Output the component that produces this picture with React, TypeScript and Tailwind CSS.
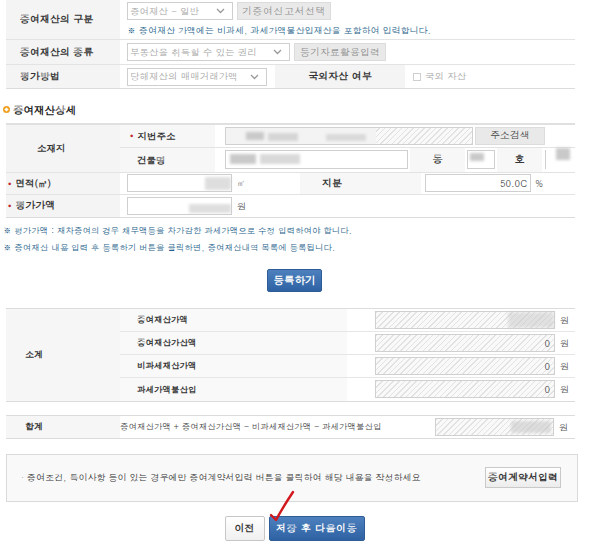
import { ReactNode } from 'react'

const font = "font-['Dotum','Noto_Sans_CJK_KR','Noto_Sans',sans-serif]"
const hatch =
  'bg-[repeating-linear-gradient(135deg,#e2e2e2_0px,#e2e2e2_1px,#f9f9f9_1px,#f9f9f9_4px)]'

function Chevron() {
  return (
    <svg width="9" height="6" viewBox="0 0 9 6" className="shrink-0">
      <path d="M1 1 L4.5 4.5 L8 1" fill="none" stroke="#9a9a9a" strokeWidth="1.3" />
    </svg>
  )
}

function FakeSelect({ label, width }: { label: string; width: string }) {
  return (
    <div
      className={`${width} h-[18px] flex items-center justify-between border border-[#cfcfcf] bg-white pl-[2px] pr-[7px] text-[9.5px] text-[#a5a5a5]`}
    >
      <span>{label}</span>
      <Chevron />
    </div>
  )
}

function GrayButton({ children, className = '' }: { children: ReactNode; className?: string }) {
  return (
    <div
      className={`h-[18px] flex items-center justify-center bg-[#e9e9e9] border border-[#dcdcdc] text-[10px] ${className}`}
    >
      {children}
    </div>
  )
}

function Blur({ className }: { className: string }) {
  return <div className={`absolute bg-[#c9c9c9] blur-[1.5px] ${className}`} />
}

function Star() {
  return <span className="text-[#c0282d] mr-[4px] text-[9px]">•</span>
}

export default function App() {
  return (
    <div className={`relative w-[589px] h-[558px] overflow-hidden bg-white ${font} text-[#333]`}>
      {/* 기본 정보 */}
      <div className="ml-[6px] w-[569px] text-[10px]">
        <div className="flex h-[40px] border-b border-[#e3e3e3]">
          <div className="w-[114px] shrink-0 bg-[#f4f4f4] flex items-center pl-[14px] font-bold">
            증여재산의 구분
          </div>
          <div className="pl-[7px] pt-[2px]">
            <div className="flex gap-[4px]">
              <FakeSelect label="증여재산 - 일반" width="w-[106px]" />
              <GrayButton className="w-[94px] text-[#8f8f8f] tracking-[0.5px]">기증여신고서선택</GrayButton>
            </div>
            <div className="mt-[4px] text-[9px] text-[#1d5f8a]">
              ※ 증여재산 가액에는 비과세, 과세가액불산입재산을 포함하여 입력합니다.
            </div>
          </div>
        </div>
        <div className="flex h-[25px] border-b border-[#e3e3e3]">
          <div className="w-[114px] shrink-0 bg-[#f4f4f4] flex items-center pl-[14px] font-bold">
            증여재산의 종류
          </div>
          <div className="pl-[7px] flex items-center gap-[4px]">
            <FakeSelect label="부동산을 취득할 수 있는 권리" width="w-[163px]" />
            <GrayButton className="w-[92px] text-[#8f8f8f]">등기자료활용입력</GrayButton>
          </div>
        </div>
        <div className="flex h-[24px] border-b border-[#dcdcdc]">
          <div className="w-[114px] shrink-0 bg-[#f4f4f4] flex items-center pl-[14px] font-bold">
            평가방법
          </div>
          <div className="pl-[7px] flex items-center w-[155px]">
            <FakeSelect label="당해재산의 매매거래가액" width="w-[140px]" />
          </div>
          <div className="w-[130px] bg-[#f4f4f4] flex items-center justify-center font-bold">국외자산 여부</div>
          <div className="flex items-center pl-[8px] gap-[4px] text-[#a5a5a5] text-[9.5px]">
            <span className="w-[8px] h-[8px] border border-[#cfcfcf] bg-white" />
            국외 자산
          </div>
        </div>
      </div>

      {/* 증여재산상세 */}
      <div className="mt-[13px] ml-[3px] flex items-center gap-[3px] text-[10.5px] font-bold text-[#222]">
        <span className="w-[7px] h-[7px] rounded-full bg-[#f0a020] flex items-center justify-center">
          <span className="w-[3px] h-[3px] bg-white rotate-45" />
        </span>
        증여재산상세
      </div>

      <div className="mt-[5px] ml-[6px] w-[569px] text-[9.5px] border-t-2 border-[#e0e0e0]">
        <div className="flex border-b border-[#e3e3e3]">
          <div className="w-[114px] shrink-0 bg-[#f4f4f4] flex items-center pl-[31px] font-bold">소재지</div>
          <div className="flex-1">
            <div className="flex h-[23px] border-b border-[#e3e3e3]">
              <div className="w-[95px] shrink-0 bg-[#f7f7f7] flex items-center pl-[10px] font-bold">
                <Star />
                지번주소
              </div>
              <div className="flex items-center pl-[10px] gap-[2px]">
                <div className={`relative w-[248px] h-[18px] border border-[#d0d0d0] ${hatch}`}>
                  <div className="absolute left-0 top-0 w-[150px] h-full bg-[#f3f3f3]" />
                  <Blur className="left-[20px] top-[4px] w-[18px] h-[8px]" />
                  <Blur className="left-[42px] top-[5px] w-[30px] h-[8px] opacity-70" />
                  <Blur className="left-[100px] top-[6px] w-[40px] h-[7px] opacity-60" />
                </div>
                <GrayButton className="w-[70px] text-[#444]">주소검색</GrayButton>
              </div>
            </div>
            <div className="flex h-[24px]">
              <div className="w-[95px] shrink-0 bg-[#f7f7f7] flex items-center pl-[17px] font-bold">건물명</div>
              <div className="flex items-center pl-[10px] w-[195px]">
                <div className="relative w-[183px] h-[19px] border border-[#cfcfcf] bg-white">
                  <Blur className="left-[4px] top-[3px] w-[26px] h-[10px]" />
                  <Blur className="left-[34px] top-[3px] w-[40px] h-[10px] opacity-70" />
                </div>
              </div>
              <div className="w-[55px] bg-[#f7f7f7] flex items-center justify-center font-bold text-[10px]">동</div>
              <div className="flex items-center pl-[2px] w-[32px]">
                <div className="relative w-[28px] h-[19px] border border-[#cfcfcf] bg-white">
                  <Blur className="left-[2px] top-[2px] w-[14px] h-[8px]" />
                </div>
              </div>
              <div className="w-[45px] bg-[#f7f7f7] flex items-center justify-center font-bold text-[10px]">호</div>
              <div className="flex items-center pl-[3px] flex-1">
                <div className="relative w-full h-[19px] border-l border-[#cfcfcf]">
                  <Blur className="left-[10px] -top-[2px] w-[14px] h-[12px]" />
                </div>
              </div>
            </div>
          </div>
        </div>
        <div className="flex h-[22px] border-b border-[#e3e3e3]">
          <div className="w-[114px] shrink-0 bg-[#f4f4f4] flex items-center pl-[2px] font-bold">
            <Star />
            면적(㎡)
          </div>
          <div className="flex items-center pl-[7px] w-[180px] gap-[5px]">
            <div className="relative w-[105px] h-[18px] border border-[#cfcfcf] bg-white">
              <Blur className="right-0 top-[2px] w-[26px] h-[13px] opacity-60" />
            </div>
            <span className="text-[8px] text-[#555]">㎡</span>
          </div>
          <div className="w-[121px] bg-[#f7f7f7] flex items-center pl-[22px] font-bold text-[10px]">지분</div>
          <div className="flex items-center pl-[4px] gap-[4px]">
            <div className="w-[106px] h-[18px] border border-[#cfcfcf] bg-white flex items-center justify-end pr-[3px] text-[9.5px]">
              50.0C
            </div>
            <span className="text-[9px] text-[#555]">%</span>
          </div>
        </div>
        <div className="flex h-[23px] border-b border-[#dcdcdc]">
          <div className="w-[114px] shrink-0 bg-[#f4f4f4] flex items-center pl-[2px] font-bold text-[10px]">
            <Star />
            평가가액
          </div>
          <div className="flex items-center pl-[7px] gap-[5px]">
            <div className="relative w-[105px] h-[18px] border border-[#cfcfcf] bg-white">
              <Blur className="right-0 bottom-[1px] w-[42px] h-[9px] opacity-60" />
            </div>
            <span className="text-[9.5px] text-[#555]">원</span>
          </div>
        </div>
      </div>

      <div className="mt-[4px] ml-[3px] text-[8.5px] text-[#1d5f8a] leading-[17px]">
        <div>※ 평가가액 : 재차증여의 경우 채무액등을 차가감한 과세가액으로 수정 입력하여야 합니다.</div>
        <div>※ 증여재산 내용 입력 후 등록하기 버튼을 클릭하면, 증여재산내역 목록에 등록됩니다.</div>
      </div>

      <div className="mt-[13px] flex justify-center">
        <div className="w-[55px] h-[23px] rounded-[2px] bg-gradient-to-b from-[#4d80bd] to-[#2f62a3] border border-[#2e5c96] text-white font-bold text-[10.5px] flex items-center justify-center">
          등록하기
        </div>
      </div>

      {/* 소계 */}
      <div className="mt-[16px] ml-[6px] w-[569px] text-[8.5px] border-t border-[#dcdcdc] border-b flex">
        <div className="w-[114px] shrink-0 bg-[#f6f6f6] flex items-center pl-[19px] font-bold text-[9px]">
          소계
        </div>
        <div className="flex-1">
          {[
            { label: '증여재산가액', value: '', blur: true },
            { label: '증여재산가산액', value: '0', blur: false },
            { label: '비과세재산가액', value: '0', blur: false },
            { label: '과세가액불산입', value: '0', blur: false },
          ].map((r, i) => (
            <div key={r.label} className={`flex h-[23px] ${i < 3 ? 'border-b border-[#e6e6e6]' : ''}`}>
              <div className="w-[227px] shrink-0 bg-[#f9f9f9] flex items-center pl-[17px] font-bold">
                {r.label}
              </div>
              <div className="flex items-center pl-[28px] gap-[5px]">
                <div
                  className={`relative w-[180px] h-[18px] border border-[#d0d0d0] ${hatch} flex items-center justify-end pr-[4px] text-[9.5px]`}
                >
                  {r.blur && <Blur className="right-0 top-0 w-[46px] h-[16px] opacity-50" />}
                  {r.value}
                </div>
                <span className="text-[9.5px] text-[#555]">원</span>
              </div>
            </div>
          ))}
        </div>
      </div>

      {/* 합계 */}
      <div className="mt-[13px] ml-[6px] w-[569px] h-[24px] text-[10px] border-t border-b border-[#dcdcdc] flex">
        <div className="w-[114px] shrink-0 bg-[#f6f6f6] flex items-center pl-[19px] font-bold text-[9px]">
          합계
        </div>
        <div className="w-[315px] flex items-center text-[8.5px] text-[#444]">
          증여재산가액 + 증여재산가산액 - 비과세재산가액 - 과세가액불산입
        </div>
        <div className="flex items-center gap-[5px]">
          <div className={`relative w-[119px] h-[18px] border border-[#d0d0d0] ${hatch}`}>
            <Blur className="right-[2px] top-[2px] w-[40px] h-[12px] opacity-60" />
          </div>
          <span className="text-[9.5px] text-[#555]">원</span>
        </div>
      </div>

      {/* 안내 */}
      <div className="mt-[15px] ml-[6px] w-[572px] h-[48px] border border-[#dadada] bg-[#f9f9f9] flex items-center justify-between pl-[14px] pr-[16px]">
        <span className="text-[9px] text-[#333]">
          <span className="text-[#999] mr-[3px]">·</span>
          증여조건, 특이사항 등이 있는 경우에만 증여계약서입력 버튼을 클릭하여 해당 내용을 작성하세요
        </span>
        <div className="w-[76px] h-[21px] border border-[#c9c9c9] bg-gradient-to-b from-white to-[#ececec] flex items-center justify-center font-bold text-[10px] text-[#333]">
          증여계약서입력
        </div>
      </div>

      <div className="mt-[14px] flex justify-center gap-[4px]">
        <div className="w-[40px] h-[25px] border border-[#c6c6c6] bg-gradient-to-b from-white to-[#f0f0f0] rounded-[2px] flex items-center justify-center font-bold text-[10px]">
          이전
        </div>
        <div className="w-[96px] h-[25px] rounded-[2px] bg-gradient-to-b from-[#4d80bd] to-[#2f62a3] border border-[#2e5c96] text-white font-bold text-[10px] flex items-center justify-center tracking-[0.5px]">
          저장 후 다음이동
        </div>
      </div>

      {/* 빨간 체크 표시 */}
      <svg className="absolute left-[268px] top-[489px]" width="30" height="34" viewBox="0 0 30 34">
        <path
          d="M3 26 L8 31 Q15 18 25 3"
          fill="none"
          stroke="#d3171c"
          strokeWidth="2.4"
          strokeLinecap="round"
          strokeLinejoin="round"
        />
      </svg>
    </div>
  )
}
